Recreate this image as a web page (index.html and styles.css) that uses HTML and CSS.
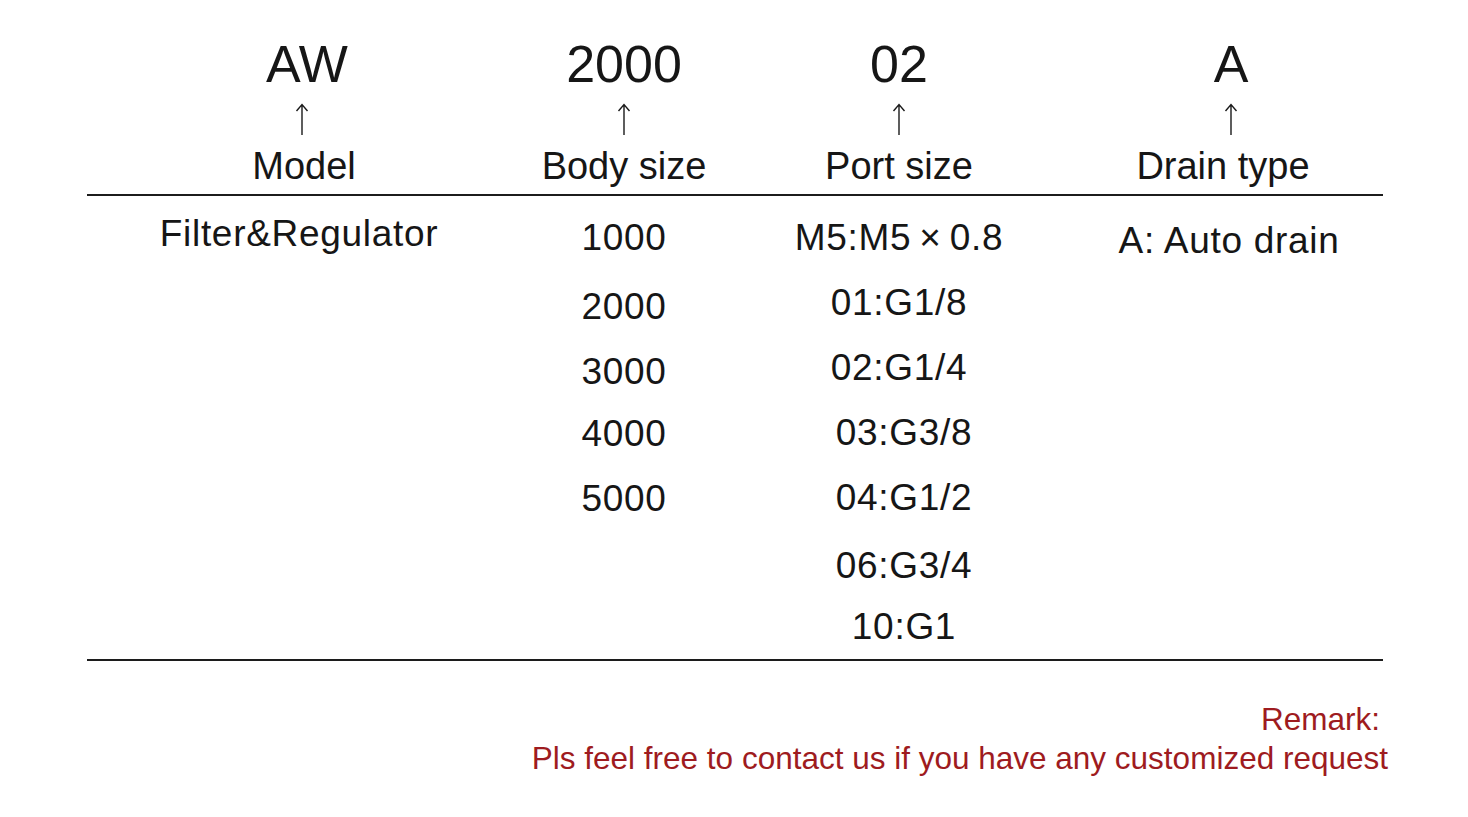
FILE: index.html
```html
<!DOCTYPE html>
<html lang="en">
<head>
<meta charset="utf-8">
<title>AW Filter &amp; Regulator ordering code</title>
<link rel="stylesheet" href="styles.css">
</head>
<body>
<main class="sheet">
  <section class="head">
    <div class="code-row cols">
      <div class="cell off-r3">AW</div>
      <div class="cell">2000</div>
      <div class="cell">02</div>
      <div class="cell off-r8">A</div>
    </div>
    <div class="arrow-row cols">
      <div class="cell off-l2"><svg class="arrow" viewBox="0 0 14 32"><path d="M7 1.5V32M1.5 8L7 1.5L12.5 8"/></svg></div>
      <div class="cell"><svg class="arrow" viewBox="0 0 14 32"><path d="M7 1.5V32M1.5 8L7 1.5L12.5 8"/></svg></div>
      <div class="cell"><svg class="arrow" viewBox="0 0 14 32"><path d="M7 1.5V32M1.5 8L7 1.5L12.5 8"/></svg></div>
      <div class="cell off-r8"><svg class="arrow" viewBox="0 0 14 32"><path d="M7 1.5V32M1.5 8L7 1.5L12.5 8"/></svg></div>
    </div>
    <div class="label-row cols">
      <div class="cell">Model</div>
      <div class="cell">Body size</div>
      <div class="cell">Port size</div>
      <div class="cell">Drain type</div>
    </div>
  </section>
  <hr class="rule">
  <section class="body cols">
    <div class="col col-model"><div class="item">Filter&amp;Regulator</div></div>
    <div class="col">
      <div class="item">1000</div>
      <div class="item down4">2000</div>
      <div class="item">3000</div>
      <div class="item up3">4000</div>
      <div class="item">5000</div>
    </div>
    <div class="col">
      <div class="item">M5:M5&#8201;×&#8201;0.8</div>
      <div class="item">01:G1/8</div>
      <div class="item">02:G1/4</div>
      <div class="item shift">03:G3/8</div>
      <div class="item shift">04:G1/2</div>
      <div class="item shift down3">06:G3/4</div>
      <div class="item shift up4">10:G1</div>
    </div>
    <div class="col col-drain"><div class="item">A: Auto drain</div></div>
  </section>
  <hr class="rule">
  <section class="remark">
    <p class="remark-title">Remark:</p>
    <p class="remark-text">Pls feel free to contact us if you have any customized request</p>
  </section>
</main>
</body>
</html>
```
FILE: styles.css
```css
html, body {
  margin: 0;
  padding: 0;
  background: #ffffff;
}

body {
  font-family: "Liberation Sans", Arial, sans-serif;
  color: #161616;
  width: 1468px;
  height: 817px;
  overflow: hidden;
}

.sheet {
  padding-left: 87px;
  width: 1296px;
}

.cols {
  display: grid;
  grid-template-columns: 434px 206px 344px 304px;
}

.cell {
  text-align: center;
  white-space: nowrap;
}

.off-r3 { padding-left: 6px; }
.off-r8 { padding-left: 16px; }
.off-l2 { padding-right: 4px; }

.head {
  padding-top: 34px;
}

.code-row {
  font-size: 52px;
  line-height: 60px;
}

.arrow-row {
  margin-top: 9px;
  height: 32px;
}

.arrow {
  display: block;
  margin: 0 auto;
  width: 14px;
  height: 32px;
  fill: none;
  stroke: #1a1a1a;
  stroke-width: 1.4;
}

.label-row {
  margin-top: 9px;
  font-size: 38px;
  line-height: 44px;
}

.rule {
  margin: 0;
  border: 0;
  height: 2px;
  background: #1c1c1c;
}

.head + .rule {
  margin-top: 6px;
}

.body {
  padding-top: 9px;
  font-size: 37px;
  line-height: 65px;
  letter-spacing: 0.7px;
}

.col {
  display: flex;
  flex-direction: column;
  align-items: center;
}

.item {
  white-space: nowrap;
}

.col-model {
  margin-top: -4px;
  padding-right: 10px;
}

.col-drain {
  margin-top: 3px;
  padding-left: 12px;
}

.shift { padding-left: 10px; }
.down3 { margin-top: 3px; }
.down4 { margin-top: 4px; }
.up3 { margin-top: -3px; }
.up4 { margin-top: -4px; }

.remark {
  margin-top: 39px;
  margin-right: -5px;
  text-align: right;
  color: #9e1b20;
  font-size: 31.5px;
  line-height: 39px;
}

.remark p {
  margin: 0;
  white-space: nowrap;
}

.remark-title {
  padding-right: 8px;
}
```
